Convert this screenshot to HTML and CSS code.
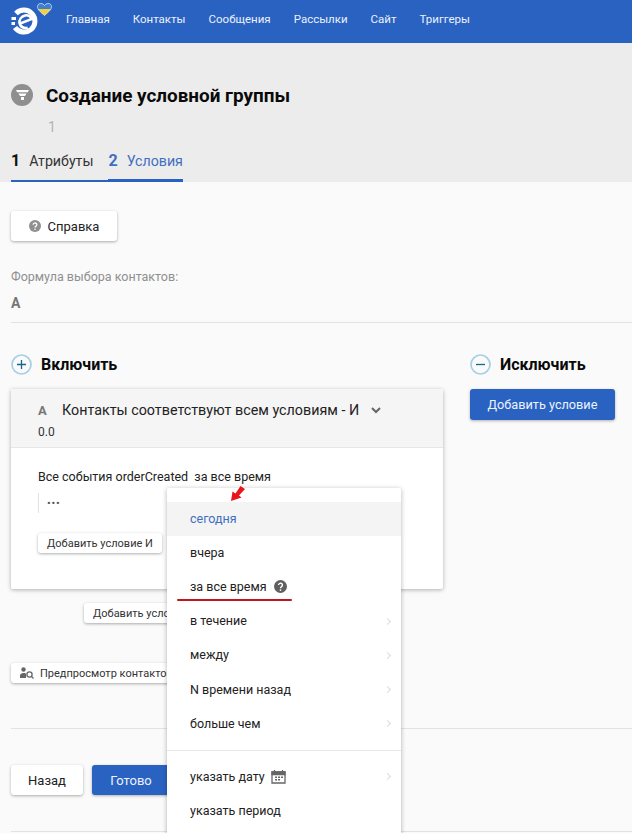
FILE: index.html
```html
<!DOCTYPE html>
<html lang="ru">
<head>
<meta charset="utf-8">
<title>Создание условной группы</title>
<link rel="stylesheet" href="styles.css">
</head>
<body>
<header class="topbar">
  <a class="logo">
    <svg width="66" height="43" viewBox="0 0 66 43">
      <defs>
        <linearGradient id="flag" x1="0" y1="0" x2="0" y2="1">
          <stop offset="0.5" stop-color="#3d7fd0"/>
          <stop offset="0.5" stop-color="#f2d13c"/>
        </linearGradient>
      </defs>
      <path d="M16 13.500A11 11 0 1 1 15 27.500" class="logo-ring"/>
      <path d="M11.500 18.500h4.500M11.500 23.500h3.500" class="logo-ticks"/>
      <path d="M19.500 23.800l12-4.700c-1-2.800-3.800-4.300-6.500-3.600-3.700 1-6.100 4.300-5.400 7.900.8 3.500 4.300 5.300 8.100 4.400" class="logo-e"/>
      <path d="M44.500 15.500C40 11.500 37.500 9.500 37.500 6.700 37.500 4.600 39 3.500 40.700 3.500 42.200 3.500 43.800 4.300 44.500 5.500 45.200 4.300 46.800 3.500 48.300 3.500 50 3.500 51.500 4.600 51.500 6.700 51.500 9.500 49 11.500 44.500 15.500z" fill="url(#flag)" stroke="#dbe6f5" stroke-width=".8"/>
    </svg>
  </a>
  <nav class="nav">
    <a>Главная</a><a>Контакты</a><a>Сообщения</a><a>Рассылки</a><a>Сайт</a><a>Триггеры</a>
  </nav>
</header>

<section class="page-head">
  <div class="title-row">
    <span class="title-icon">
      <svg width="13" height="10" viewBox="0 0 13 10"><path d="M0 0h13l-1.200 2.200H1.200zM2.500 3.500h8L9 6H4zM5 7h3v3H5z" fill="#fff"/></svg>
    </span>
    <h1>Создание условной группы</h1>
  </div>
  <div class="subcount">1</div>
  <div class="tabs">
    <div class="tab"><b>1</b><span>Атрибуты</span></div>
    <div class="tab tab-active"><b>2</b><span>Условия</span></div>
  </div>
</section>

<main class="content">
  <button class="btn btn-help">
    <svg width="12" height="12" viewBox="0 0 12 12"><circle cx="6" cy="6" r="6" fill="#8f8f8f"/><path d="M4.200 4.700a1.800 1.700 0 1 1 2.800 1.400c-.7.500-1 .8-1 1.400" fill="none" stroke="#fff" stroke-width="1.300"/><circle cx="6" cy="9.300" r=".8" fill="#fff"/></svg>
    Справка
  </button>
  <div class="formula-label">Формула выбора контактов:</div>
  <div class="formula-value">A</div>
  <hr class="rule rule-formula">

  <div class="columns">
    <div class="col-include">
      <div class="col-head">
        <svg width="21" height="21" viewBox="0 0 21 21"><circle cx="10.500" cy="10.500" r="9.500" fill="none" stroke="#a5cfe6" stroke-width="1.700"/><path d="M6 10.500h9M10.500 6v9" stroke="#12698a" stroke-width="1.300"/></svg>
        <h2>Включить</h2>
      </div>
      <div class="card">
        <div class="card-head">
          <div class="card-title"><b>A</b><span>Контакты соответствуют всем условиям - И</span>
            <svg width="10" height="7" viewBox="0 0 10 7"><path d="M1 1l4 4 4-4" fill="none" stroke="#666" stroke-width="2"/></svg>
          </div>
          <div class="card-num">0.0</div>
        </div>
        <div class="card-body">
          <div class="event-line">Все события orderCreated&nbsp; за все время</div>
          <div class="dots-row"><span class="dots">•••</span></div>
          <button class="btn btn-small btn-and">Добавить условие И</button>
        </div>
      </div>
      <div class="add-or"><button class="btn btn-small btn-pad">Добавить условие ИЛИ</button></div>
      <button class="btn btn-small btn-pad btn-preview">
        <svg width="14" height="12" viewBox="0 0 14 12"><circle cx="3.500" cy="2.500" r="2.200" fill="#666"/><path d="M0 11V8.500C0 7 1.500 6 3.500 6S6 6.500 6 7v4z" fill="#666"/><circle cx="9.500" cy="7.500" r="2.600" fill="none" stroke="#666" stroke-width="1.300"/><path d="M11.500 9.500l2 2" stroke="#666" stroke-width="1.300"/></svg>
        Предпросмотр контактов
      </button>
    </div>
    <div class="col-exclude">
      <div class="col-head">
        <svg width="21" height="21" viewBox="0 0 21 21"><circle cx="10.500" cy="10.500" r="9.500" fill="none" stroke="#a5cfe6" stroke-width="1.700"/><path d="M6 10.500h9" stroke="#12698a" stroke-width="1.300"/></svg>
        <h2>Исключить</h2>
      </div>
      <button class="btn btn-primary btn-add">Добавить условие</button>
    </div>
  </div>

  <hr class="rule rule-actions">
  <div class="actions">
    <button class="btn btn-back">Назад</button>
    <button class="btn btn-primary btn-done">Готово</button>
  </div>
  <hr class="rule rule-end">
</main>

<div class="menu">
  <div class="menu-item menu-item-active">сегодня</div>
  <div class="menu-item">вчера</div>
  <div class="menu-item">за все время
    <svg class="menu-help" width="13" height="13" viewBox="0 0 12 12"><circle cx="6" cy="6" r="6" fill="#5f5f5f"/><path d="M4.200 4.700a1.800 1.700 0 1 1 2.800 1.400c-.7.500-1 .8-1 1.400" fill="none" stroke="#fff" stroke-width="1.300"/><circle cx="6" cy="9.300" r=".8" fill="#fff"/></svg>
  </div>
  <div class="menu-item has-sub">в течение</div>
  <div class="menu-item has-sub">между</div>
  <div class="menu-item has-sub">N времени назад</div>
  <div class="menu-item has-sub">больше чем</div>
  <div class="menu-sep"></div>
  <div class="menu-item has-sub">указать дату
    <svg class="menu-cal" width="15" height="15" viewBox="0 0 15 15"><path d="M1 3h13v11H1z" fill="none" stroke="#666" stroke-width="1.300"/><path d="M1 3h13v2.500H1zM3.500 1v2M11.500 1v2" fill="#666" stroke="#666" stroke-width="1.300"/><path d="M4 7.500h2v1.500H4zM7 7.500h2v1.500H7zM10 7.500h2v1.500h-2zM4 10h2v1.500H4zM7 10h2v1.500H7z" fill="#666"/></svg>
  </div>
  <div class="menu-item">указать период</div>
</div>

<svg class="annot-arrow" width="16" height="17" viewBox="0 0 16 17"><path d="M1 16L2.500 6.500 5.500 8.500 10.500 1 15 4 9 10.500 11.500 12.500z" fill="#e8161c"/></svg>
<div class="annot-line"></div>
</body>
</html>
```
FILE: styles.css
```css
* { box-sizing: border-box; }
html, body { margin: 0; height: 833px; overflow: hidden; }
body {
  position: relative;
  background: #fafafa;
  color: #111;
  font-family: Roboto, "Liberation Sans", sans-serif;
  font-size: 12px;
}

.topbar {
  height: 43px;
  background: #2a62c2;
  display: flex;
  align-items: flex-start;
}
.logo { width: 66px; height: 43px; display: block; }
.logo-ring { fill: none; stroke: #fff; stroke-width: 5; }
.logo-ticks { fill: none; stroke: #fff; stroke-width: 3; }
.logo-e { fill: none; stroke: #fff; stroke-width: 2.600; }
.nav { display: flex; gap: 23px; line-height: 38px; color: #eaf1fb; font-size: 11.500px; }

.page-head { height: 139px; background: #ececec; padding: 41px 11px 0; }
.title-row { display: flex; align-items: center; height: 22px; }
.title-icon {
  width: 22px; height: 22px; border-radius: 50%;
  background: #8f8f8f;
  display: flex; align-items: center; justify-content: center;
}
h1 { margin: 0 0 0 13px; font-size: 18.900px; font-weight: 700; color: #0a0a0a; }
.subcount { margin: 13px 0 0 37px; height: 16px; line-height: 16px; font-size: 14px; color: #b4b4b4; }
.tabs { display: flex; margin-top: 11px; height: 36px; }
.tab {
  display: flex; align-items: baseline; gap: 9px;
  height: 36px;
  padding-top: 5px;
  padding-right: 15px;
  font-size: 14.200px;
  color: #333;
  border-bottom: 2px solid #2a62c2;
}
.tab b { font-size: 16px; color: #111; }
.tab-active { color: #3f6fc0; padding-right: 0; border-bottom-width: 3px; }
.tab-active b { color: #3f6fc0; }

.content { padding: 29px 11px 0; }
.btn {
  font-family: inherit;
  border: 0;
  border-radius: 3px;
  background: #fff;
  box-shadow: 0 1px 3px rgba(0, 0, 0, .32);
  color: #222;
  display: inline-flex;
  align-items: center;
  justify-content: center;
  padding: 0;
}
.btn-help { width: 106px; height: 30px; gap: 7px; font-size: 13px; }
.formula-label { margin-top: 28px; font-size: 12.500px; line-height: 16px; color: #8f8f8f; }
.formula-value { margin-top: 10px; font-size: 14px; line-height: 16px; font-weight: 700; color: #777; }
.rule { border: 0; border-top: 1px solid #e2e2e2; margin: 0 -11px 0 0; }
.rule-formula { margin-top: 11px; }

.columns { display: flex; gap: 27px; margin-top: 29px; }
.col-include { width: 432px; }
.col-exclude { width: 145px; }
.col-head { display: flex; align-items: center; gap: 9px; height: 24px; }
h2 { margin: 0; font-size: 16px; font-weight: 700; color: #0a0a0a; }

.card { margin-top: 13px; height: 200px; background: #fff; border-radius: 2px; box-shadow: 0 1px 4px rgba(0, 0, 0, .3); }
.card-head { height: 59px; background: #f5f5f5; border-bottom: 1px solid #e6e6e6; padding: 13px 0 0 27px; font-size: 14.300px; color: #222; }
.card-title { display: flex; align-items: center; height: 16px; }
.card-title b { color: #777; font-size: 13px; width: 24px; }
.card-title svg { margin-left: 12px; }
.card-num { margin: 6px 0 0 0; font-size: 12px; line-height: 16px; color: #333; }
.card-body { padding: 21px 27px 0; }
.event-line { font-size: 12.500px; line-height: 16px; color: #222; }
.dots-row { margin-top: 8px; height: 20px; border-left: 1px solid #e2e2e2; padding-left: 8px; line-height: 20px; }
.dots { font-size: 11px; letter-spacing: .8px; color: #555; }
.btn-small { height: 20px; font-size: 11px; gap: 6px; color: #333; }
.btn-pad { padding: 0 9px; }
.btn-and { width: 124px; margin-top: 20px; }
.add-or { margin: 14px 0 0 73px; }
.btn-preview { margin-top: 40px; }

.btn-primary { background: #2a62c2; color: #edf3fc; box-shadow: 0 1px 3px rgba(0, 0, 0, .3); }
.btn-add { width: 145px; height: 31px; margin-top: 13px; font-size: 12.700px; }

.rule-actions { margin-top: 45px; }
.actions { display: flex; gap: 9px; margin-top: 36px; }
.btn-back { width: 72px; height: 30px; font-size: 13px; }
.btn-done { width: 78px; height: 30px; font-size: 13px; }
.rule-end { margin-top: 36px; }

.menu {
  position: absolute;
  left: 167px; top: 488px;
  width: 234px; height: 360px;
  padding-top: 14px;
  background: #fff;
  border-radius: 2px;
  box-shadow: 0 1px 5px rgba(0, 0, 0, .3);
}
.menu-item {
  height: 34.200px;
  display: flex; align-items: center;
  padding: 0 0 2px 23px;
  font-size: 12.500px;
  color: #222;
  position: relative;
}
.menu-item-active { background: #f4f4f4; color: #3f6fc0; }
.menu-help { margin-left: 7px; }
.menu-cal { margin-left: 6px; }
.has-sub::after {
  content: "";
  position: absolute;
  right: 11px; top: 50%;
  width: 4px; height: 4px;
  margin-top: -3px;
  border-top: 1px solid #dcdcdc;
  border-right: 1px solid #dcdcdc;
  transform: rotate(45deg);
}
.menu-sep { height: 1px; background: #e8e8e8; margin: 9px 0 9px; }

.annot-arrow { position: absolute; left: 230px; top: 485px; }
.annot-line { position: absolute; left: 177px; top: 599px; width: 115px; height: 2px; background: #c2151b; border-radius: 1px; }
```
